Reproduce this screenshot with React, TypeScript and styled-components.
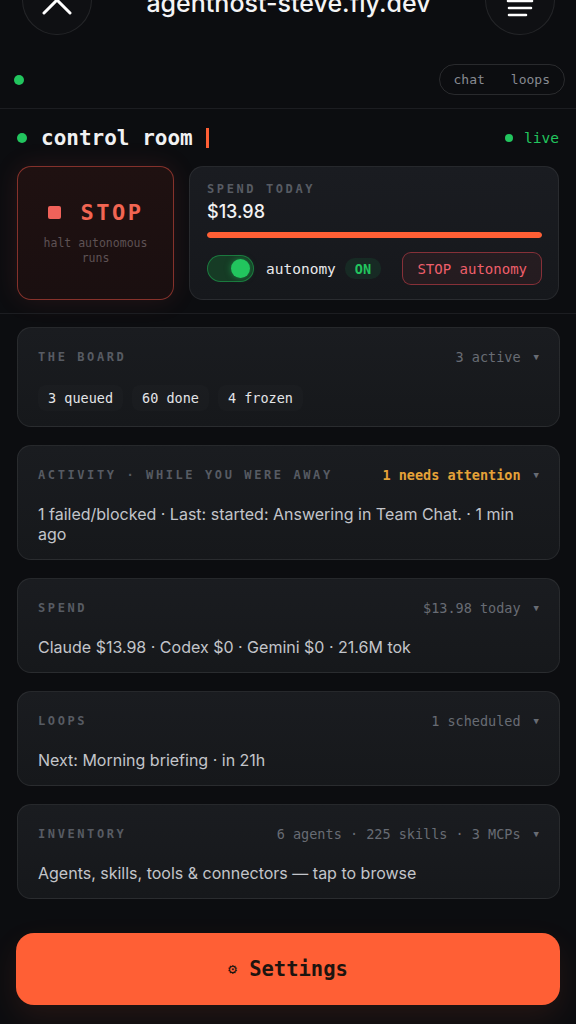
import React from 'react';
import styled, { createGlobalStyle } from 'styled-components';

const mono = `'DejaVu Sans Mono', 'Liberation Mono', monospace`;
const sans = `Inter, 'Noto Sans', 'Liberation Sans', sans-serif`;

const GlobalStyle = createGlobalStyle`
  * { box-sizing: border-box; }
  html, body { margin: 0; padding: 0; background: #0c0d10; }
  body { font-family: ${sans}; -webkit-font-smoothing: antialiased; }
`;

const Page = styled.div`
  width: 576px;
  height: 1024px;
  overflow: hidden;
  display: flex;
  flex-direction: column;
  background: #0c0d10;
`;

// browser chrome, cut off at the top of the shot
const BrowserBar = styled.div`
  display: flex;
  align-items: center;
  justify-content: space-between;
  height: 70px;
  margin-top: -35px;
  padding: 0 21px 0 22px;
`;

const RoundButton = styled.button`
  width: 70px;
  height: 70px;
  border-radius: 50%;
  border: 1px solid rgba(255, 255, 255, 0.09);
  background: #0f1013;
  display: flex;
  align-items: center;
  justify-content: center;
  padding: 0;
  color: #fff;
`;

const SiteTitle = styled.div`
  font-family: ${sans};
  font-size: 25px;
  font-weight: 500;
  color: #f4f4f5;
  line-height: 30px;
  margin-top: 5px;
`;

const NavRow = styled.div`
  display: flex;
  align-items: center;
  justify-content: space-between;
  height: 31px;
  margin: 29px 0 13px;
  padding: 0 11px 0 14px;
`;

const Dot = styled.span<{ size: number }>`
  width: ${(p) => p.size}px;
  height: ${(p) => p.size}px;
  border-radius: 50%;
  background: #22c55e;
  flex-shrink: 0;
`;

const Pill = styled.div`
  display: flex;
  align-items: center;
  height: 31px;
  border: 1px solid rgba(255, 255, 255, 0.12);
  border-radius: 16px;
  padding: 0 1px;
`;

const PillLink = styled.span`
  font-family: ${mono};
  font-size: 13px;
  color: #878a91;
  padding: 0 13px;
`;

const Divider = styled.div`
  height: 1px;
  background: #1c1d21;
`;

const ControlSection = styled.section`
  padding: 15px 17px 15px;
`;

const HeadingRow = styled.div`
  display: flex;
  align-items: center;
  height: 28px;
  margin-bottom: 14px;
`;

const Heading = styled.h1`
  margin: 0 0 0 14px;
  font-family: ${mono};
  font-size: 21px;
  font-weight: 600;
  color: #f1f1f2;
  line-height: 28px;
`;

const Cursor = styled.span`
  width: 3px;
  height: 20px;
  margin-left: 13px;
  background: #ff5f35;
`;

const Live = styled.span`
  margin-left: auto;
  display: flex;
  align-items: center;
  gap: 11px;
  font-family: ${mono};
  font-size: 14.5px;
  color: #22c55e;
`;

const CardRow = styled.div`
  display: grid;
  grid-template-columns: 157px 1fr;
  gap: 15px;
  height: 132px;
`;

const StopCard = styled.button`
  display: flex;
  flex-direction: column;
  align-items: center;
  justify-content: center;
  border-radius: 14px;
  border: 1px solid rgba(220, 78, 66, 0.55);
  background: linear-gradient(180deg, #1f1111 0%, #1a0f10 100%);
  box-shadow: 0 0 26px rgba(232, 80, 70, 0.12);
  padding: 0 12px;
  font-family: ${mono};
`;

const StopRow = styled.div`
  display: flex;
  align-items: center;
  gap: 20px;
  margin-bottom: 10px;
`;

const StopSquare = styled.span`
  width: 13px;
  height: 13px;
  border-radius: 2px;
  background: #f0625a;
`;

const StopLabel = styled.span`
  font-size: 22px;
  font-weight: 700;
  letter-spacing: 2.5px;
  color: #f26552;
  line-height: 26px;
`;

const StopHint = styled.span`
  font-size: 11.5px;
  line-height: 15.5px;
  color: #5e5254;
  text-align: center;
`;

const SpendCard = styled.div`
  display: flex;
  flex-direction: column;
  border-radius: 14px;
  border: 1px solid rgba(255, 255, 255, 0.07);
  background: linear-gradient(180deg, #1a1c21 0%, #16181c 100%);
  padding: 15px 16px 14px 17px;
`;

const Eyebrow = styled.div`
  font-family: ${mono};
  font-size: 12px;
  font-weight: 700;
  letter-spacing: 2.6px;
  color: #575b63;
  line-height: 14px;
  text-transform: uppercase;
  white-space: nowrap;
`;

const Amount = styled.div`
  font-family: ${sans};
  font-size: 18px;
  font-weight: 500;
  color: #f2f2f3;
  line-height: 22px;
  margin-top: 5px;
`;

const Track = styled.div`
  height: 6px;
  margin-top: 9px;
  border-radius: 3px;
  background: #26282d;
  overflow: hidden;
`;

const Fill = styled.div`
  height: 100%;
  border-radius: 3px;
  background: #ff5f35;
`;

const ToggleRow = styled.div`
  display: flex;
  align-items: center;
  height: 33px;
  margin-top: 14px;
`;

const Switch = styled.span<{ on: boolean }>`
  position: relative;
  width: 47px;
  height: 27px;
  border-radius: 14px;
  background: ${(p) => (p.on ? '#163b25' : '#2a2c31')};
  border: 1px solid ${(p) => (p.on ? 'rgba(34,197,94,0.45)' : 'rgba(255,255,255,0.1)')};
  flex-shrink: 0;
`;

const Knob = styled.span<{ on: boolean }>`
  position: absolute;
  top: 3px;
  left: ${(p) => (p.on ? '23px' : '3px')};
  width: 19px;
  height: 19px;
  border-radius: 50%;
  background: #22c55e;
  box-shadow: 0 0 6px rgba(34, 197, 94, 0.5);
`;

const ToggleLabel = styled.span`
  margin-left: 12px;
  font-family: ${mono};
  font-size: 14.5px;
  color: #e9e9eb;
`;

const OnBadge = styled.span`
  margin-left: 9px;
  height: 21px;
  padding: 0 10px;
  display: flex;
  align-items: center;
  border-radius: 10px;
  background: rgba(34, 197, 94, 0.1);
  font-family: ${mono};
  font-size: 13.5px;
  font-weight: 700;
  color: #22c55e;
`;

const DangerButton = styled.button`
  margin-left: auto;
  height: 33px;
  padding: 0 14px;
  border-radius: 9px;
  border: 1px solid rgba(232, 70, 80, 0.5);
  background: rgba(232, 70, 80, 0.07);
  font-family: ${mono};
  font-size: 14px;
  font-weight: 500;
  color: #ef5f6b;
  white-space: nowrap;
`;

const BoardSection = styled.section`
  display: flex;
  flex-direction: column;
  gap: 18px;
  padding: 13px 16px 0 17px;
`;

const Card = styled.div`
  border-radius: 14px;
  border: 1px solid rgba(255, 255, 255, 0.07);
  background: linear-gradient(180deg, #1a1c20 0%, #16181b 100%);
  padding: 20px 20px 15px;
`;

const CardHead = styled.div`
  display: flex;
  align-items: center;
  justify-content: space-between;
  height: 18px;
`;

const Meta = styled.span<{ tone?: 'amber' }>`
  display: flex;
  align-items: center;
  font-family: ${mono};
  font-size: 13.5px;
  font-weight: ${(p) => (p.tone === 'amber' ? 600 : 400)};
  color: ${(p) => (p.tone === 'amber' ? '#e5a238' : '#686c74')};
  white-space: pre;
`;

const Caret = styled.span`
  margin-left: 13px;
  font-size: 9px;
  color: #686c74;
`;

const Body = styled.p`
  margin: 20px 0 0;
  font-family: ${sans};
  font-size: 16px;
  line-height: 20px;
  color: #c3c5ca;
`;

const Chips = styled.div`
  display: flex;
  gap: 9px;
  margin-top: 19px;
`;

const Chip = styled.span`
  height: 26px;
  padding: 0 10px;
  display: flex;
  align-items: center;
  border-radius: 8px;
  background: rgba(255, 255, 255, 0.015);
  font-family: ${mono};
  font-size: 13.5px;
  font-weight: 500;
  color: #e4e5e8;
`;

const SettingsButton = styled.button`
  margin: 34px 16px 0;
  height: 72px;
  border: none;
  border-radius: 18px;
  background: #ff5f35;
  box-shadow: 0 12px 30px rgba(255, 95, 53, 0.1);
  display: flex;
  align-items: center;
  justify-content: center;
  gap: 12px;
  font-family: ${mono};
  font-size: 20.5px;
  font-weight: 700;
  color: #1d140f;
`;

const Gear = styled.span`
  font-size: 15px;
`;

type Section = {
  title: string;
  meta: string;
  tone?: 'amber';
  body?: string;
  chips?: string[];
};

const sections: Section[] = [
  { title: 'The board', meta: '3 active', chips: ['3 queued', '60 done', '4 frozen'] },
  {
    title: 'Activity · while you were away',
    meta: '1 needs attention',
    tone: 'amber',
    body: '1 failed/blocked · Last: started: Answering in Team Chat. · 1 min ago',
  },
  { title: 'Spend', meta: '$13.98 today', body: 'Claude $13.98 · Codex $0 · Gemini $0 · 21.6M tok' },
  { title: 'Loops', meta: '1 scheduled', body: 'Next: Morning briefing · in 21h' },
  {
    title: 'Inventory',
    meta: '6 agents · 225 skills · 3 MCPs',
    body: 'Agents, skills, tools & connectors — tap to browse',
  },
];

const CloseIcon = () => (
  <svg width='32' height='32' viewBox='0 0 32 32' fill='none' stroke='#fff' strokeWidth='3' strokeLinecap='round'>
    <path d='M3 3 L29 29 M29 3 L3 29' />
  </svg>
);

const MenuIcon = () => (
  <svg width='28' height='40' viewBox='0 0 28 40' fill='none' stroke='#fff' strokeWidth='2.6' strokeLinecap='round'>
    <path d='M3 14 H25 M2 21 H26 M3 28 H25 M3 35 H20' />
  </svg>
);

export default function App() {
  const autonomyOn = true;
  const spendRatio = 1;

  return (
    <Page>
      <GlobalStyle />
      <BrowserBar>
        <RoundButton aria-label='close'>
          <CloseIcon />
        </RoundButton>
        <SiteTitle>agenthost-steve.fly.dev</SiteTitle>
        <RoundButton aria-label='menu'>
          <MenuIcon />
        </RoundButton>
      </BrowserBar>

      <NavRow>
        <Dot size={10} />
        <Pill>
          <PillLink>chat</PillLink>
          <PillLink>loops</PillLink>
        </Pill>
      </NavRow>
      <Divider />

      <ControlSection>
        <HeadingRow>
          <Dot size={10} />
          <Heading>control room</Heading>
          <Cursor />
          <Live>
            <Dot size={8} />
            live
          </Live>
        </HeadingRow>
        <CardRow>
          <StopCard>
            <StopRow>
              <StopSquare />
              <StopLabel>STOP</StopLabel>
            </StopRow>
            <StopHint>halt autonomous runs</StopHint>
          </StopCard>
          <SpendCard>
            <Eyebrow>Spend today</Eyebrow>
            <Amount>$13.98</Amount>
            <Track>
              <Fill style={{ width: `${spendRatio * 100}%` }} />
            </Track>
            <ToggleRow>
              <Switch on={autonomyOn}>
                <Knob on={autonomyOn} />
              </Switch>
              <ToggleLabel>autonomy</ToggleLabel>
              <OnBadge>ON</OnBadge>
              <DangerButton>STOP autonomy</DangerButton>
            </ToggleRow>
          </SpendCard>
        </CardRow>
      </ControlSection>
      <Divider />

      <BoardSection>
        {sections.map((s) => (
          <Card key={s.title}>
            <CardHead>
              <Eyebrow>{s.title}</Eyebrow>
              <Meta tone={s.tone}>
                {s.meta}
                <Caret>▼</Caret>
              </Meta>
            </CardHead>
            {s.chips && (
              <Chips>
                {s.chips.map((c) => (
                  <Chip key={c}>{c}</Chip>
                ))}
              </Chips>
            )}
            {s.body && <Body>{s.body}</Body>}
          </Card>
        ))}
      </BoardSection>

      <SettingsButton>
        <Gear>⚙</Gear>
        Settings
      </SettingsButton>
    </Page>
  );
}
